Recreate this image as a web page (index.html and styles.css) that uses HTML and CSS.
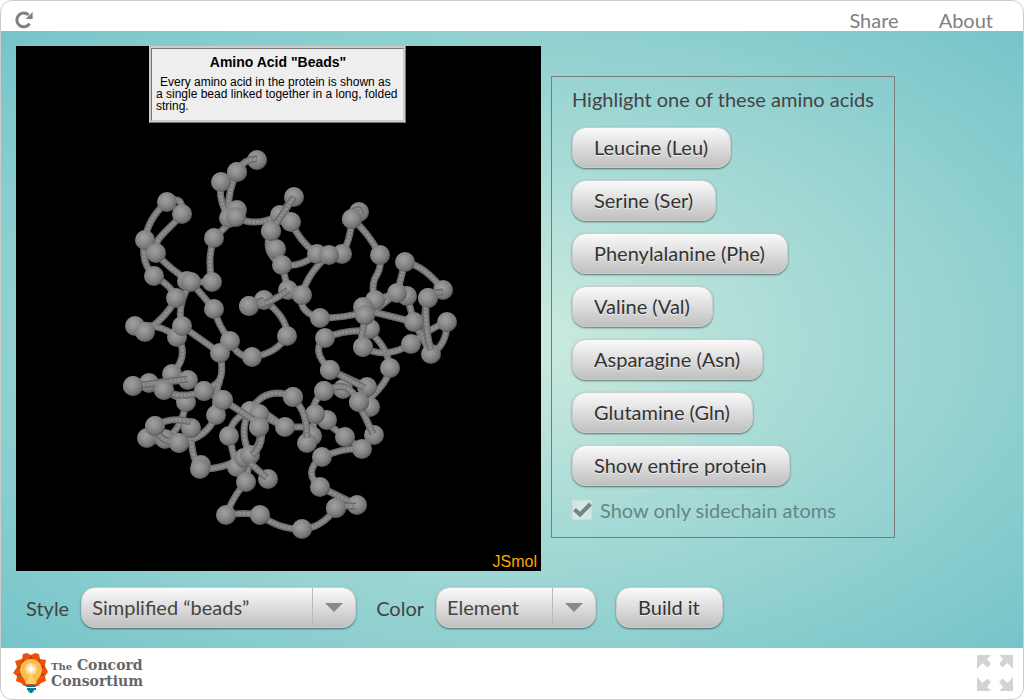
FILE: index.html
```html
<!DOCTYPE html>
<html lang="en">
<head>
<meta charset="utf-8">
<title>Amino Acid Beads</title>
<link rel="stylesheet" href="styles.css">
</head>
<body>
<div class="app">
  <header class="topbar">
    <button class="icon-button" type="button" aria-label="Reload">
      <svg width="18" height="18" viewBox="0 0 18 18"><path d="M14.600 12.600A6.900 6.900 0 1 1 13.600 4" fill="none" stroke="#808080" stroke-width="3"/><path d="M17.600 1v7h-7z" fill="#808080"/></svg>
    </button>
    <nav class="links"><a href="#share">Share</a><a href="#about">About</a></nav>
  </header>

  <main class="stage">
    <div class="workspace">
      <section class="viewer" aria-label="Protein model">
        <svg class="model" viewBox="16 46 525 525">
          <defs>
            <radialGradient id="shade" cx=".42" cy=".38" r=".66">
              <stop offset="0" stop-color="#a0a0a0"/><stop offset=".35" stop-color="#909090"/><stop offset=".75" stop-color="#767676"/><stop offset="1" stop-color="#505050"/>
            </radialGradient>
            <circle id="b" r="10" fill="url(#shade)"/>
            <path id="chain" d="M237 172L221 182M237 172Q226 195 229 218M221 182Q218 200 228 216M236 217L214 238Q207 258 212 282L191 282M191 282Q168 268 156 253C152 238 170 230 182 214Q184 194 167 202Q148 218 145 240Q140 262 154 276Q172 286 176 298Q168 316 145 332M135 326Q120 326 145 332M135 326Q158 322 177 337M191 282Q176 305 182 326M191 282L214 309Q218 325 230 341Q238 358 252 357Q276 354 287 336Q288 318 264 300M236 217Q255 228 280 215M294 197L280 215M271 231Q262 252 282 265M282 265Q300 268 317 254M291 222Q300 242 317 254M282 265L288 290L302 295M302 295Q308 272 329 255M302 295Q298 312 320 318Q345 318 365 312M342 254Q350 242 352 219Q368 232 380 255Q382 268 375 278Q371 288 375 300L397 293M365 318L397 293L401 278L405 262Q425 266 443 290M428 298Q420 322 431 354M407 296L414 322L365 310M411 344Q430 328 447 322Q447 345 431 354M414 322L431 354M363 347Q385 360 411 344M368 331Q387 345 390 368Q388 382 370 398M325 338Q345 329 370 331M325 338Q310 350 330 370L367 387M315 414Q310 404 324 391M315 414L312 436M294 397Q265 385 250 411M315 414L345 437L362 449L374 435M362 449Q345 447 322 457Q302 472 320 487L357 505M336 508Q322 528 302 529Q280 530 260 515Q243 512 226 515Q234 495 246 482L250 455M182 326L220 353Q226 382 212 386M177 337Q190 355 172 374L188 380M133 386L149 383L188 380M164 390L186 402M204 391L223 400M216 415Q214 395 220 380M216 415Q208 438 179 443M147 438Q152 443 165 439Q182 430 186 402M191 428Q190 455 200 469Q220 470 244 458M229 436Q231 418 250 411M229 436L237 469M250 411Q238 430 250 455M259 427Q264 442 250 455M259 414L285 427L315 427M261 410L285 427"/>
            <path id="front" d="M257 159Q246 158 237 170M249 306Q268 306 288 290M249 306L264 300M271 231L294 197M363 347Q359 335 366 320M443 292L434 293M431 350Q425 330 426 305M327 391Q347 378 359 402M359 405Q366 418 373 434M294 400Q307 410 307 438M336 506L356 506M133 386L188 379M164 390Q180 400 204 391M155 426Q158 442 179 443M155 426Q170 416 191 422M223 400L257 422M250 463L267 478M252 455Q264 445 261 430M352 212Q361 206 360 214M330 370L365 388"/>
          </defs>
          <g class="tube-edge"><use href="#chain"/></g><g class="tube"><use href="#chain"/></g><g class="tube-shine"><use href="#chain"/></g>
          <g>
            <use href="#b" x="257" y="160"/><use href="#b" x="221" y="182"/><use href="#b" x="237" y="172"/><use href="#b" x="237" y="210"/><use href="#b" x="229" y="218"/><use href="#b" x="236" y="217"/><use href="#b" x="214" y="238"/><use href="#b" x="212" y="282"/><use href="#b" x="187" y="281"/><use href="#b" x="191" y="282"/><use href="#b" x="167" y="202"/><use href="#b" x="182" y="214"/><use href="#b" x="145" y="240"/><use href="#b" x="156" y="253"/><use href="#b" x="154" y="276"/><use href="#b" x="176" y="298"/><use href="#b" x="214" y="309"/>
            <use href="#b" x="280" y="215"/><use href="#b" x="291" y="222"/><use href="#b" x="271" y="231"/><use href="#b" x="276" y="249"/><use href="#b" x="282" y="265"/><use href="#b" x="288" y="290"/><use href="#b" x="264" y="300"/><use href="#b" x="249" y="306"/><use href="#b" x="294" y="197"/><use href="#b" x="302" y="295"/><use href="#b" x="317" y="254"/><use href="#b" x="342" y="254"/><use href="#b" x="329" y="255"/><use href="#b" x="359" y="212"/><use href="#b" x="352" y="219"/><use href="#b" x="380" y="255"/><use href="#b" x="405" y="262"/><use href="#b" x="443" y="290"/><use href="#b" x="428" y="298"/><use href="#b" x="407" y="296"/><use href="#b" x="397" y="293"/><use href="#b" x="375" y="300"/><use href="#b" x="370" y="329"/><use href="#b" x="363" y="307"/><use href="#b" x="365" y="315"/><use href="#b" x="320" y="318"/><use href="#b" x="414" y="322"/><use href="#b" x="447" y="322"/>
            <use href="#b" x="135" y="326"/><use href="#b" x="145" y="332"/><use href="#b" x="177" y="337"/><use href="#b" x="182" y="326"/><use href="#b" x="230" y="341"/><use href="#b" x="220" y="353"/><use href="#b" x="252" y="357"/><use href="#b" x="287" y="336"/><use href="#b" x="172" y="374"/><use href="#b" x="188" y="380"/><use href="#b" x="149" y="383"/><use href="#b" x="133" y="386"/><use href="#b" x="186" y="402"/><use href="#b" x="164" y="390"/><use href="#b" x="204" y="391"/><use href="#b" x="216" y="415"/><use href="#b" x="223" y="400"/><use href="#b" x="147" y="438"/><use href="#b" x="165" y="439"/><use href="#b" x="155" y="426"/><use href="#b" x="191" y="428"/><use href="#b" x="179" y="443"/><use href="#b" x="201" y="465"/><use href="#b" x="200" y="469"/>
            <use href="#b" x="229" y="436"/><use href="#b" x="250" y="411"/><use href="#b" x="259" y="414"/><use href="#b" x="259" y="427"/><use href="#b" x="285" y="427"/><use href="#b" x="237" y="467"/><use href="#b" x="244" y="458"/><use href="#b" x="250" y="455"/><use href="#b" x="268" y="479"/><use href="#b" x="246" y="482"/><use href="#b" x="293" y="397"/><use href="#b" x="327" y="420"/><use href="#b" x="315" y="414"/><use href="#b" x="312" y="436"/><use href="#b" x="307" y="443"/><use href="#b" x="345" y="437"/><use href="#b" x="374" y="435"/><use href="#b" x="362" y="449"/><use href="#b" x="370" y="407"/><use href="#b" x="367" y="387"/><use href="#b" x="359" y="402"/><use href="#b" x="343" y="389"/><use href="#b" x="324" y="391"/><use href="#b" x="330" y="370"/><use href="#b" x="390" y="368"/><use href="#b" x="363" y="347"/><use href="#b" x="325" y="338"/><use href="#b" x="411" y="344"/><use href="#b" x="431" y="354"/><use href="#b" x="322" y="457"/><use href="#b" x="320" y="487"/><use href="#b" x="357" y="505"/><use href="#b" x="336" y="508"/><use href="#b" x="302" y="529"/><use href="#b" x="260" y="515"/><use href="#b" x="226" y="515"/>
          </g>
          <g class="tube-edge"><use href="#front"/></g><g class="tube"><use href="#front"/></g><g class="tube-shine"><use href="#front"/></g>
          <g>
            <use href="#b" x="237" y="172"/><use href="#b" x="271" y="231"/><use href="#b" x="249" y="306"/><use href="#b" x="336" y="508"/><use href="#b" x="359" y="402"/><use href="#b" x="324" y="391"/><use href="#b" x="365" y="315"/><use href="#b" x="363" y="347"/><use href="#b" x="352" y="219"/><use href="#b" x="428" y="298"/><use href="#b" x="293" y="397"/><use href="#b" x="330" y="370"/><use href="#b" x="133" y="386"/><use href="#b" x="164" y="390"/><use href="#b" x="204" y="391"/><use href="#b" x="223" y="400"/><use href="#b" x="155" y="426"/><use href="#b" x="179" y="443"/><use href="#b" x="259" y="427"/>
          </g>
        </svg>
        <div class="caption">
          <h1>Amino Acid "Beads"</h1>
          <p>Every amino acid in the protein is shown as a single bead linked together in a long, folded string.</p>
        </div>
        <span class="brand">JSmol</span>
      </section>

      <section class="panel">
        <h2>Highlight one of these amino acids</h2>
        <button class="button" type="button">Leucine (Leu)</button>
        <button class="button" type="button">Serine (Ser)</button>
        <button class="button" type="button">Phenylalanine (Phe)</button>
        <button class="button" type="button">Valine (Val)</button>
        <button class="button" type="button">Asparagine (Asn)</button>
        <button class="button" type="button">Glutamine (Gln)</button>
        <button class="button" type="button">Show entire protein</button>
        <label class="check">
          <span class="check-box"><input type="checkbox" checked disabled><svg width="20" height="20" viewBox="0 0 20 20"><path d="M2.500 9.500L8 14.500L18.500 4" fill="none" stroke="#6f8583" stroke-width="4"/></svg></span>
          Show only sidechain atoms
        </label>
      </section>
    </div>

    <div class="controls">
      <label for="style">Style</label>
      <span class="pulldown pulldown-wide"><select id="style"><option>Simplified “beads”</option></select></span>
      <label for="color">Color</label>
      <span class="pulldown"><select id="color"><option>Element</option></select></span>
      <button class="button" type="button">Build it</button>
    </div>
  </main>

  <footer class="footer">
    <a class="logo" href="#home" aria-label="The Concord Consortium">
      <svg width="36" height="42" viewBox="0 0 36 42">
        <path d="M18 3L22 1L26 2L27 7L33 8L32 14L35 20L32 24L33 29L28 31L25 34H11L8 31L3 29L4 24L0 21L4 15L2 9L9 7L10 2L14 1z" fill="#e8540a"/>
        <path d="M18 3l3 7h-6zM27 7l-1 5-4-2zM32 14l-5 4-1-5zM32 24l-6-1 2-4zM9 7l1 5 4-2zM4 15l5 3 1-5zM4 24l6-1-2-4z" fill="#b5451b"/>
        <path d="M13 32C12 26 7 24 7 18A11 11 0 0 1 29 18C29 24 24 26 23 32z" fill="#fdbb4c"/>
        <path d="M18 18L13 32h10z" fill="#ffd066"/>
        <circle cx="18" cy="17" r="6" fill="#ffd681"/>
        <path d="M18 12v10M13 17h10M14.500 13.500l7 7M21.500 13.500l-7 7" stroke="#fff" stroke-width="1"/><circle cx="18" cy="17" r="2.500" fill="#fff"/>
        <path d="M13 33h10v2H13zM14 36h9v2h-9zM15 38h6v1.500h-1.500V41h-3v-1.500H15z" fill="#087e9b"/>
      </svg>
      <span class="logo-text"><span><small>The</small> Concord</span><span>Consortium</span></span>
    </a>
    <button class="icon-button" type="button" aria-label="Full screen">
      <svg width="38" height="38" viewBox="0 0 38 38" fill="#d2d3d4">
        <path id="corner" d="M1 1h14l-4 4 4 5-3.500 3.500-5-4.500-5.500 6z"/>
        <use href="#corner" transform="matrix(-1 0 0 1 38 0)"/><use href="#corner" transform="matrix(1 0 0 -1 0 38)"/><use href="#corner" transform="rotate(180 19 19)"/>
      </svg>
    </button>
  </footer>
</div>
</body>
</html>
```
FILE: styles.css
```css
* { box-sizing: border-box; }

body {
  margin: 0;
  background: #fff;
  color: #444;
  font: 20px/24px Lato, sans-serif;
}

.app {
  display: flex;
  flex-direction: column;
  min-height: 100vh;
  border: 1px solid #ccc;
  border-radius: 12px;
  overflow: hidden;
  background: #fff;
}

.topbar {
  display: flex;
  align-items: flex-end;
  justify-content: space-between;
  height: 30px;
  padding: 0 30px 0 14px;
}

.links { display: flex; gap: 40px; }
.links a { color: #808080; text-decoration: none; line-height: 22px; }

.icon-button {
  display: flex;
  padding: 0;
  border: 0;
  background: none;
}
.topbar .icon-button { margin-bottom: 2px; }

.stage {
  flex: 1;
  padding: 15px;
  background: radial-gradient(ellipse farthest-corner at center, #cdebdf, #75c4c9);
}

.workspace { display: flex; align-items: flex-start; gap: 10px; }

.viewer {
  position: relative;
  flex: 0 1 525px;
  background: #000;
}
.model { display: block; width: 100%; }
.tube-edge, .tube, .tube-shine { fill: none; stroke-linecap: butt; stroke-linejoin: round; }
.tube-edge { stroke: #686868; stroke-width: 7px; }
.tube { stroke: #8c8c8c; stroke-width: 4px; }
.tube-shine { stroke: #787878; stroke-width: 6px; stroke-dasharray: 1 3; }

.caption {
  position: absolute;
  top: 0;
  left: 133px;
  width: 257px;
  height: 77px;
  padding: 5px 3px 5px 4px;
  border: 3px ridge #ccc;
  background: #eee;
  color: #000;
  font: 12px/12px "Liberation Sans", Arial, sans-serif;
}
.caption h1 { margin: 0 0 6px; font-size: 14px; line-height: 16px; text-align: center; }
.caption p { margin: 0; text-indent: 4px; }

.brand {
  position: absolute;
  right: 4px;
  bottom: 0;
  color: #ffa500;
  font: 16px/18px "Liberation Sans", Arial, sans-serif;
}

.panel {
  display: flex;
  flex-direction: column;
  align-items: flex-start;
  gap: 12px;
  margin-top: 30px;
  padding: 10px 20px 15px;
  border: 1px solid #7b7b7b;
}
.panel h2 { margin: 0 0 4px; font-size: 20px; font-weight: 400; line-height: 24px; }

.button, .pulldown select {
  height: 41px;
  border: 1px solid #ccc;
  border-radius: 14px;
  background: linear-gradient(#fafafa, #c0c0c0);
  box-shadow: 0 1px 2px rgba(0, 0, 0, .5);
  font: 20px/24px Lato, sans-serif;
}
.button { padding: 0 22px 2px 21px; color: #333; text-shadow: 0 1px 0 #eee; }

.check { display: flex; align-items: center; gap: 8px; color: #668583; }
.check-box { position: relative; width: 20px; height: 20px; }
.check-box input {
  appearance: none;
  display: block;
  width: 20px;
  height: 20px;
  margin: 0;
  border: 1px solid #cddfdc;
  background: #d6e6e3;
}
.check-box svg { position: absolute; inset: 0; }

.controls { display: flex; align-items: center; gap: 12px; padding: 16px 10px 5px; }
.controls .pulldown { width: 160px; margin-right: 8px; }
.controls .pulldown-wide { width: 275px; }

.pulldown { position: relative; display: block; }
.pulldown select {
  appearance: none;
  display: block;
  width: 100%;
  padding: 0 54px 2px 10px;
  color: #444;
}
.pulldown::before {
  content: "";
  position: absolute;
  top: 1px;
  right: 43px;
  height: 39px;
  border-left: 1px solid #bbb;
}
.pulldown::after {
  content: "";
  position: absolute;
  top: 16px;
  right: 13px;
  border: 9px solid transparent;
  border-top-color: #888;
  border-bottom: 0;
}

.footer {
  display: flex;
  align-items: center;
  justify-content: space-between;
  height: 51px;
  padding: 0 9px 2px 12px;
}
.logo { display: flex; align-items: center; gap: 2px; color: #666; text-decoration: none; }
.logo-text {
  display: flex;
  flex-direction: column;
  font: bold 14px/14px "DejaVu Serif", serif;
}
.logo-text small { font-size: 10px; }
```
